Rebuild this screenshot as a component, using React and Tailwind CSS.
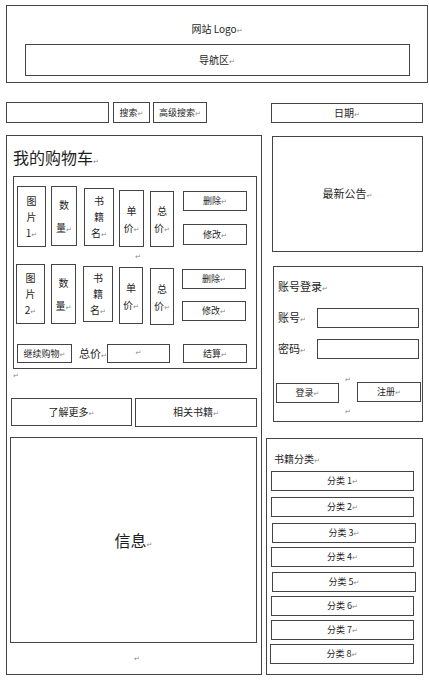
import React from "react";

const P = () => (
  <span className="text-[7px] leading-none text-[#8a8a8a] font-['DejaVu_Sans',sans-serif] align-baseline">↵</span>
);

const PB = ({ cls = "" }) => (
  <div className={`text-[7px] leading-[7px] h-[7px] text-[#8a8a8a] font-['DejaVu_Sans',sans-serif] ${cls}`}>↵</div>
);

const B = "border border-[#444]";

function VBox({ chars, cls, leading }) {
  return (
    <div className={`${B} ${cls} flex flex-col items-center justify-center text-[10px] ${leading}`}>
      {chars.map((c, i) => (
        <span key={i}>
          {c}
          {i === chars.length - 1 ? <P /> : null}
        </span>
      ))}
    </div>
  );
}

function Btn({ label, cls, size = "text-[9px]" }) {
  return (
    <div className={`${B} ${cls} flex items-center justify-center ${size} leading-none`}>
      <span>
        {label}
        <P />
      </span>
    </div>
  );
}

function CartRow1() {
  return (
    <div className="flex items-start h-[71px] pt-[9px]">
      <VBox chars={["图", "片", "1"]} cls="ml-[3px] w-[29px] h-[61px]" leading="leading-[16px]" />
      <VBox chars={["数", "量"]} cls="ml-[5px] w-[26px] h-[60px]" leading="leading-[23px]" />
      <VBox chars={["书", "籍", "名"]} cls="ml-[7px] mt-[2px] w-[30px] h-[58px]" leading="leading-[16px]" />
      <VBox chars={["单", "价"]} cls="ml-[5px] mt-[4px] w-[25px] h-[57px]" leading="leading-[17px]" />
      <VBox chars={["总", "价"]} cls="ml-[6px] mt-[5px] w-[24px] h-[56px]" leading="leading-[17px]" />
      <div className="ml-[9px] flex flex-col">
        <Btn label="删除" cls="mt-[5px] w-[64px] h-[20px]" />
        <Btn label="修改" cls="mt-[13px] w-[64px] h-[21px]" />
      </div>
    </div>
  );
}

function CartRow2() {
  return (
    <div className="flex items-start h-[61px]">
      <VBox chars={["图", "片", "2"]} cls="ml-[2px] w-[29px] h-[60px]" leading="leading-[16px]" />
      <VBox chars={["数", "量"]} cls="ml-[6px] w-[25px] h-[60px]" leading="leading-[23px]" />
      <VBox chars={["书", "籍", "名"]} cls="ml-[7px] mt-[2px] w-[30px] h-[56px]" leading="leading-[16px]" />
      <VBox chars={["单", "价"]} cls="ml-[6px] mt-[3px] w-[24px] h-[57px]" leading="leading-[17px]" />
      <VBox chars={["总", "价"]} cls="ml-[7px] mt-[4px] w-[24px] h-[57px]" leading="leading-[17px]" />
      <div className="ml-[8px] flex flex-col">
        <Btn label="删除" cls="mt-[5px] w-[64px] h-[20px]" />
        <Btn label="修改" cls="mt-[12px] w-[64px] h-[20px]" />
      </div>
    </div>
  );
}

export default function App() {
  const cats = [
    { n: 1, cls: "mt-[5px] ml-[4px] w-[143px]" },
    { n: 2, cls: "mt-[6px] ml-[4px] w-[143px]" },
    { n: 3, cls: "mt-[6px] ml-[5px] w-[144px]" },
    { n: 4, cls: "mt-[4px] ml-[4px] w-[143px]" },
    { n: 5, cls: "mt-[5px] ml-[5px] w-[144px]" },
    { n: 6, cls: "mt-[4px] ml-[4px] w-[143px]" },
    { n: 7, cls: "mt-[4px] ml-[4px] w-[143px]" },
    { n: 8, cls: "mt-[4px] ml-[3px] w-[144px]" },
  ];
  return (
    <div className="w-[429px] h-[680px] bg-white overflow-hidden text-[#1e1e1e] font-['Noto_Sans_CJK_SC',sans-serif] flex flex-col">
      {/* Header */}
      <div className={`${B} ml-[6px] mt-[5px] w-[422px] h-[78px] flex flex-col items-center`}>
        <div className="mt-[16px] text-[10px] leading-[14px]">
          网站 Logo<P />
        </div>
        <div className={`${B} mt-[8px] w-[385px] h-[32px] flex items-center justify-center text-[10px] leading-none`}>
          <span>
            导航区<P />
          </span>
        </div>
      </div>

      {/* Search row */}
      <div className="mt-[19px] flex items-start">
        <div className={`${B} ml-[6px] w-[103px] h-[21px]`} />
        <Btn label="搜索" cls="ml-[4px] w-[37px] h-[21px]" />
        <Btn label="高级搜索" cls="ml-[3px] w-[54px] h-[21px]" />
        <Btn label="日期" cls="ml-[64px] mt-[1px] w-[152px] h-[20px]" size="text-[10px]" />
      </div>

      {/* Main */}
      <div className="mt-[12px] flex items-start">
        {/* Left column */}
        <div className={`${B} ml-[6px] w-[256px] h-[540px] flex flex-col`}>
          <div className="mt-[11px] ml-[6px] text-[16px] leading-[20px]">
            我的购物车<P />
          </div>
          <div className={`${B} mt-[9px] ml-[6px] w-[244px] h-[193px] flex flex-col`}>
            <CartRow1 />
            <div className="h-[16px] pt-[6px] pl-[121px]">
              <PB />
            </div>
            <CartRow2 />
            <div className="mt-[19px] flex items-center">
              <Btn label="继续购物" cls="ml-[3px] w-[55px] h-[19px]" />
              <div className="ml-[7px] w-[28px] text-[11px] leading-none">
                总价<P />
              </div>
              <div className={`${B} w-[63px] h-[19px] flex items-center justify-center leading-none`}>
                <P />
              </div>
              <Btn label="结算" cls="ml-[13px] w-[64px] h-[19px]" />
            </div>
          </div>
          <PB cls="ml-[6px] mt-[4px]" />
          <div className="mt-[18px] flex items-start">
            <Btn label="了解更多" cls="ml-[4px] w-[121px] h-[28px]" size="text-[10px]" />
            <Btn label="相关书籍" cls="ml-[3px] w-[122px] h-[29px]" size="text-[10px]" />
          </div>
          <div className={`${B} mt-[10px] ml-[3px] w-[247px] h-[206px] flex items-center justify-center`}>
            <span className="text-[16px] leading-none">
              信息<P />
            </span>
          </div>
          <PB cls="mt-[13px] ml-[127px]" />
        </div>

        {/* Right column */}
        <div className="ml-[4px] flex flex-col">
          <div className={`${B} ml-[6px] mt-[1px] w-[151px] h-[116px] flex items-center justify-center`}>
            <span className="text-[11px] leading-none">
              最新公告<P />
            </span>
          </div>

          <div className={`${B} ml-[7px] mt-[14px] w-[150px] h-[156px] flex flex-col`}>
            <div className="mt-[12px] ml-[4px] text-[11px] leading-[14px]">
              账号登录<P />
            </div>
            <div className="mt-[15px] flex items-center">
              <div className="ml-[4px] w-[39px] text-[11px] leading-none">
                账号<P />
              </div>
              <div className={`${B} w-[102px] h-[20px]`} />
            </div>
            <div className="mt-[11px] flex items-center">
              <div className="ml-[4px] w-[39px] text-[11px] leading-none">
                密码<P />
              </div>
              <div className={`${B} w-[102px] h-[20px]`} />
            </div>
            <div className="mt-[21px] flex items-start">
              <Btn label="登录" cls="ml-[2px] mt-[3px] w-[63px] h-[20px]" />
              <div className="w-[18px] flex flex-col items-center">
                <PB cls="-mt-[3px]" />
                <PB cls="mt-[25px]" />
              </div>
              <Btn label="注册" cls="mt-[2px] w-[64px] h-[20px]" />
            </div>
          </div>

          <div className={`${B} mt-[16px] w-[157px] h-[237px] flex flex-col`}>
            <div className="mt-[13px] ml-[7px] text-[10px] leading-[14px]">
              书籍分类<P />
            </div>
            {cats.map((c) => (
              <Btn key={c.n} label={`分类 ${c.n}`} cls={`${c.cls} h-[20px]`} />
            ))}
          </div>
        </div>
      </div>
    </div>
  );
}
